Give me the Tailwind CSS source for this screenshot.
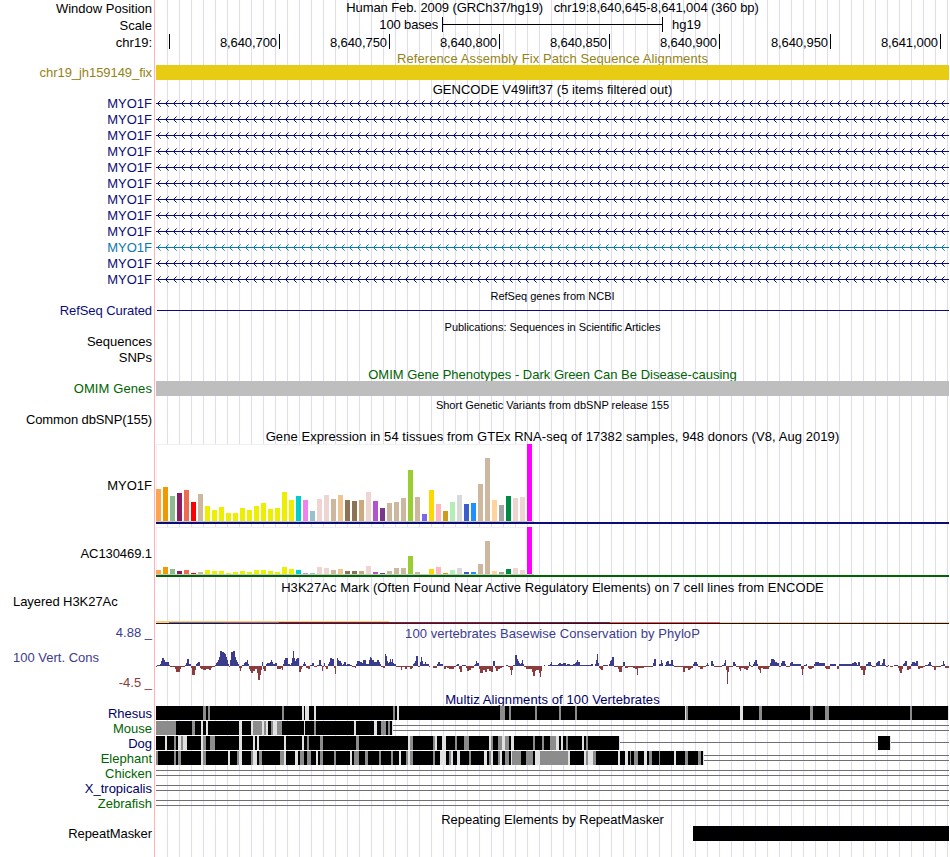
<!DOCTYPE html>
<html lang="en">
<head>
<meta charset="utf-8">
<title>chr19:8,640,645-8,641,004</title>
<script src="https://cdn.jsdelivr.net/npm/@tailwindcss/browser@4"></script>
</head>
<body class="bg-white">
<main id="browser" class="flex h-[857px] w-[950px] flex-col overflow-hidden bg-white font-['Liberation_Sans',Arial,sans-serif] text-[13px] leading-[15px] whitespace-pre text-black"></main>
<script>
const NAVY = 'text-[#0c0c78]', DARKBLUE = 'text-[#000064]', GREEN = 'text-[#006400]', BLACK = 'text-black';
const host = document.getElementById('browser');

// One horizontal band: label column, window edge, track area with guidelines.
function row(height, label, labelCls, body, bodyCls) {
  host.insertAdjacentHTML('beforeend',
    `<section class="flex shrink-0" style="height:${height}px">` +
    `<div class="w-[155px] shrink-0 border-r border-[#ffb4b4] pr-[2px] text-right ${labelCls || ''}">${label || ''}</div>` +
    `<div class="ml-px w-[793px] shrink-0 bg-[repeating-linear-gradient(90deg,transparent_0px,transparent_11px,#dcdcff_11px,#dcdcff_12px)] ${bodyCls || ''}">${body || ''}</div>` +
    `</section>`);
}
const title = (h, text, cls) => row(h, '', '', text, 'text-center ' + cls);
const svg = (h, inner, cls) =>
  `<svg class="block ${cls || ''}" width="793" height="${h}" viewBox="156 0 793 ${h}" shape-rendering="crispEdges">${inner}</svg>`;
const rect = (x, y, w, h, f) => `<rect x="${x}" y="${y}" width="${w}" height="${h}" fill="${f}"/>`;

// Position, scale and ruler
row(17, 'Window Position', 'pt-px', 'Human Feb. 2009 (GRCh37/hg19)   chr19:8,640,645-8,641,004 (360 bp)', 'text-center tracking-[-0.09px]');
row(17, 'Scale', 'pt-px',
  `<span class="w-[282px] text-right tracking-[-0.15px]">100 bases</span>` +
  `<span class="ml-1 flex h-[15px] w-[221px] items-center border-x border-black"><i class="h-px w-full bg-black"></i></span>` +
  `<span class="ml-[9px]">hg19</span>`, 'flex');
const ticks = [[169, ''], [279, '8,640,700'], [389, '8,640,750'], [499, '8,640,800'], [609, '8,640,850'], [719, '8,640,900'], [830, '8,640,950'], [940, '8,641,000']];
let prev = 155;
row(17, 'chr19:', 'pt-px', ticks.map(([x, t]) => {
  const w = x - prev; prev = x;
  return `<span class="box-border h-[15px] shrink-0 border-r border-black pt-px pr-[2px] text-right tracking-[-0.08px]" style="width:${w}px">${t}</span>`;
}).join(''), 'flex');

title(14, 'Reference Assembly Fix Patch Sequence Alignments', 'tracking-[0.1px] text-[#968214]');
row(15, 'chr19_jh159149_fix', 'tracking-[-0.06px] text-[#968214]', '<div class="h-[15px] bg-[#e8cc14]"></div>');

// Gene models
title(15, 'GENCODE V49lift37 (5 items filtered out)', 'pt-[2px] tracking-[0.03px]');
let line = 'M156 8H949V9H156Z', tips = '';
for (let x = 157; x < 949; x += 8) {
  for (const [dx, dy] of [[1, -1], [2, -2], [1, 1], [2, 2]])
    if (x + dx < 949) line += `M${x + dx} ${8 + dy}h1v1h-1z`;
  for (const dy of [-3, 3])
    if (x + 3 < 949) tips += `M${x + 3} ${8 + dy}h1v1h-1z`;
}
const arrows = `<path fill="currentColor" d="${line}"/><path fill="currentColor" fill-opacity="0.6" d="${tips}"/>`;
for (let i = 0; i < 12; i++) {
  const c = i === 9 ? 'text-[#0c78af]' : NAVY;
  row(16, 'MYO1F', 'pt-px ' + c, svg(16, arrows, c));
}

title(16, 'RefSeq genes from NCBI', 'pt-[3px] text-[11px] leading-[12px]');
row(15, 'RefSeq Curated', 'tracking-[-0.07px] ' + NAVY, svg(15, rect(157, 7, 792, 1, '#0c0c78')));
title(16, 'Publications: Sequences in Scientific Articles', 'pt-[3px] text-[11px] leading-[12px] tracking-[-0.04px]');
row(16, 'Sequences', BLACK);
row(15, 'SNPs', BLACK);
title(16, 'OMIM Gene Phenotypes - Dark Green Can Be Disease-causing', 'pt-[2px] ' + GREEN);
row(15, 'OMIM Genes', 'tracking-[0.1px] ' + GREEN, '<div class="h-[15px] bg-[#bebebe]"></div>');
title(16, 'Short Genetic Variants from dbSNP release 155', 'pt-[3px] text-[11px] leading-[12px]');
row(15, 'Common dbSNP(155)', 'tracking-[-0.11px]');

// Tissue expression
title(16, 'Gene Expression in 54 tissues from GTEx RNA-seq of 17382 samples, 948 donors (V8, Aug 2019)', 'pt-[2px] tracking-[0.07px]');
const tissue = ('ffa54f ee9a00 8fbc8f 8b1c62 ee6a50 ff0000 cdb79e ' + 'eeee00 '.repeat(13) +
  '00cdcd ee82ee 9ac0cd eed5d2 eed5d2 cdb79e eec591 8b7355 8b7355 cdaa7d eed5d2 b452cd 7a378b cdb79e cdb79e cdb79e 9acd32 cdb79e 7a67ee ffd700 ffb6c1 cd9b1d b4eeb4 d9d9d9 3a5fcd 1e90ff cdb79e cdb79e ffd39b a6a6a6 008b45 eed5d2 eed5d2 ff00ff').split(' ');
const exprA = [32,34,25,28,31,19,27,15,11,14,8,8,13,11,15,18,12,13,29,21,25,21,10,22,26,22,26,21,20,21,29,20,13,18,19,23,51,24,7,31,17,10,19,26,17,18,37,63,21,16,25,23,24,77];
const exprB = [4,7,5,3,4,1,2,4,3,3,1,2,3,2,4,4,3,2,7,5,4,1,1,7,6,4,5,3,3,3,8,2,1,3,6,6,18,2,0,5,7,1,4,6,2,2,10,33,3,2,5,6,4,47];
function expression(data, top, base, color) {
  return rect(156, top, 378, base - top + 1, '#f0f0f0') + rect(157, top + 1, 376, base - top, '#ffffff') +
    rect(156, base, 378, 1, '#c8c8c8') +
    data.map((h, i) => h ? rect(156 + i * 7, base - h, 5, h, '#' + tissue[i]) : '').join('') +
    rect(156, base + 1, 793, 2, color);
}
row(83, 'MYO1F', 'pt-[35px]', svg(83, expression(exprA, 1, 78, '#0c0c78')));
row(53, 'AC130469.1', 'pt-[20px] tracking-[-0.08px]', svg(53, expression(exprB, 1, 48, '#006400')));

// Histone mark overlay
title(16, 'H3K27Ac Mark (Often Found Near Active Regulatory Elements) on 7 cell lines from ENCODE', 'pt-px tracking-[0.06px]');
row(30, '<div class="-mt-px pl-[13px] text-left tracking-[-0.06px]">Layered H3K27Ac</div>', BLACK, svg(30,
  rect(156, 26, 233, 1, '#ffcc78') + rect(156, 27, 13, 1, '#ffcc78') + rect(169, 27, 110, 1, '#80708c') +
  rect(279, 27, 331, 1, '#801e32') + rect(610, 27, 110, 1, '#ff5a32') + rect(720, 27, 229, 1, '#ffcc78') +
  rect(156, 28, 68, 1, '#1e1432') + rect(224, 28, 276, 1, '#46142d') + rect(500, 28, 110, 1, '#2d0f28') + rect(610, 28, 339, 1, '#140f28')));

// Conservation: each entry is "position:score", held until the next position (thirds of a pixel)
const cons = [
[150, '18:-1 21:1 30:2 33:5 36:8 42:6 45:4 57:1 60:-1 75:-3 78:-6 90:-3 93:-1 105:1 108:3 110:7 116:2 123:-2 126:-9 135:-4 138:2 141:3 144:4 150:-2 153:-3 159:-4 168:-3 177:-4 183:-2 186:-1 195:1 198:3 201:4 204:6 207:9 210:15 216:14 222:13 225:12 228:9 231:6 234:2 237:-1 240:6 243:14 249:15 255:9 258:6 261:4 264:2 267:-2 270:-5 273:-2 276:1 282:3 285:4 291:6 294:2 297:-3 300:-5 303:-7 309:-5 315:-3 321:-7 324:-14 330:-9 333:-4 336:4 339:-3 342:-5 348:2 351:3 360:4 363:6 366:4 369:2 375:3 381:-3 393:-2 396:-4 399:2 402:6 405:8 414:2 420:1 423:3 426:8 429:15 432:8 435:5 438:7 441:8 447:-6 453:-3 456:-1 459:2 462:4 466:2 468:-2 474:-3 480:1 486:3 492:-1 501:1 507:6 513:1 516:-5 519:-1 522:3 525:-1 528:-3 534:2 537:4 540:8 546:7 552:-2 555:-8 558:0 561:8 564:6 567:5 573:3 576:1 579:2 582:4 588:1 591:2 600:1 606:-1 615:-2 618:2 621:5 630:4 636:3 639:6 648:2 657:6 660:9 663:8 666:6 672:4 681:6 687:4 690:2 693:-1 699:-2 705:12 708:10 711:5 714:3 717:4 720:7 723:4 726:7 729:3 732:2 738:-1 753:-4 756:-1 765:-3 771:-1 780:-3 786:-2 789:2 792:3 795:5 798:10 804:-1 810:0'],
[420, '0:4 3:9 6:5 9:2 15:4 18:2 27:-1 30:0 39:-2 51:2 54:4 60:2 69:0 72:-3 78:-1 81:-2 87:-3 102:-1 108:1 111:2 117:-3 120:-6 126:1 132:1 138:-2 141:-5 147:-4 153:-2 162:1 165:2 168:5 171:3 177:-3 180:-7 189:-4 195:-6 201:-3 207:-5 213:-6 219:5 225:-2 228:-5 234:-3 240:-2 246:-1 252:0 258:1 264:-1 270:-4 273:-9 276:-4 279:1 285:11 291:7 294:5 297:3 300:2 304:3 307:6 310:2 312:-1 318:-3 327:-3 336:-6 339:-10 345:-5 348:-4 357:-7 360:-11 364:-5 367:0 372:1 375:0 384:1 390:2 393:4 396:1 414:2 417:3 423:2 429:3 438:1 441:2 450:1 459:2 465:3 468:4 471:6 474:4 480:1 513:2 519:0 525:2 528:6 531:12 534:3 537:-2 540:-3 543:-4 549:1 564:0 567:2 570:5 573:6 576:9 582:-1 594:-3 597:-6 606:-1 609:4 615:-2 624:-1 639:-2 645:-3 651:-9 654:-2 672:-1 699:3 702:7 708:0 717:2 723:6 726:3 729:0 735:1 738:4 741:5 747:2 753:6 759:1 762:-1 789:-6 796:-2 804:-4 810:0'],
[690, '0:-3 3:-2 9:2 12:4 21:2 24:-1 30:-3 39:-1 48:1 51:3 54:1 57:0 63:5 69:2 72:-1 96:1 102:3 105:6 108:-4 111:-18 114:-6 117:-1 129:4 135:2 138:-1 147:-3 150:-5 154:-2 162:-3 168:-4 174:-2 177:4 180:1 183:-1 189:2 192:4 195:6 201:2 204:-3 207:-4 210:-7 213:-2 219:-3 237:-1 240:3 243:7 252:6 255:4 261:3 267:-1 273:3 276:5 285:2 288:-1 300:3 303:4 309:2 333:-3 336:-9 339:-3 342:1 348:2 351:0 354:-2 357:-3 366:-2 372:2 375:4 387:3 405:-2 408:-3 420:2 438:0 441:-3 447:2 486:3 492:4 498:3 501:1 504:4 510:-2 513:-4 519:-9 525:-4 528:2 534:4 543:1 546:-1 558:3 561:4 564:5 570:1 576:3 579:7 585:1 588:-1 594:1 597:0 600:-1 609:0 612:1 624:-2 627:-5 630:-7 636:-3 639:2 642:3 645:5 651:-4 657:-3 663:2 666:4 675:3 678:5 684:-3 690:-2 699:-1 705:1 714:2 717:4 723:1 726:-1 732:-4 738:-1 753:1 759:5 762:2 765:-2 777:0']];
let wig = '';
for (const [off, str] of cons) {
  const s = str.split(' ').map(v => v.split(':').map(Number));
  for (let i = 0; i < s.length - 1; i++) {
    const x = off + Math.round(s[i][0] / 3), w = off + Math.round(s[i + 1][0] / 3) - x, h = s[i][1];
    if (w > 0 && h) wig += h > 0 ? rect(x, 25 - h, w, h, '#3c3c8c') : rect(x, 25, w, -h, '#8c3c3c');
  }
}
row(16, '4.88 _', 'text-[#3c3c8c]', '100 vertebrates Basewise Conservation by PhyloP', 'pt-px text-center tracking-[0.06px] text-[#3c3c8c]');
row(50, '<div class="h-[25px] pt-[9px] pl-[13px] text-left text-[#3c3c8c]">100 Vert. Cons</div><div class="pt-[9px] text-[#8c3c3c]">-4.5 _</div>', '', svg(50, wig));

// Species alignments: gray (g) and pale (l) stretches over each black block
title(15, 'Multiz Alignments of 100 Vertebrates', 'pt-px tracking-[0.1px] text-[#000064]');
const shade = { g: '#8c8c8c', l: '#e1e1e1' };
function marks(groups) {
  return groups.map(([off, str]) => str.split(' ').map(m => {
    const [a, b] = m.slice(1).split('-').map(Number);
    const x = off + Math.round(a / 3);
    return rect(x, 0, off + Math.round(b / 3) - x, 14, shade[m[0]]);
  }).join('')).join('');
}
const gap = (x, ys, end = 949) => ys.map(y => rect(x, y, end - x, 1, '#707070')).join('');
const species = [
  ['Rhesus', DARKBLUE, rect(156, 0, 792, 14, '#000') + marks([
    [150, 'g159-168 g174-180 g396-402 l456-462 l465-477 l492-498 g729-735 l741-747'],
    [420, 'g240-255 g267-273 g345-351 g417-423 g465-471 l795-798 g798-804'],
    [690, 'l150-159 g207-216 g360-369 g405-417 g660-666 l774-777']])],
  ['Mouse', GREEN, gap(393, [4, 9]) + rect(156, 0, 236, 14, '#000') + marks([
    [150, 'g18-78 g126-135 l153-159 l168-174 l267-276 l303-309 g309-336 l336-342 g342-348 l348-354 g363-369 l369-381 g381-396 l462-465 g492-498 l612-618 l672-681 g693-708 g714-720 l726-729']])],
  ['Dog', DARKBLUE, gap(620, [6], 878) + gap(891, [6]) + rect(156, 0, 463, 14, '#000') + rect(878, 0, 12, 14, '#000') + marks([
    [150, 'l45-51 g72-78 l84-93 g93-99 l99-111 l153-159 g159-168 g180-195 l267-276 l309-315 l321-327 l402-408 l456-462 g471-477 g510-519 g618-627 l774-780 g780-789'],
    [420, 'g39-45 l45-51 l66-78 g105-111 g132-147 l207-213 g213-219 g234-246 l246-255 g255-267 l273-282 g339-345 g366-372 g390-408 l408-417 l423-429 g438-444 l486-492 g498-504 l597-600'],
    [690, 'l600-603']])],
  ['Elephant', GREEN, gap(704, [4, 9]) + rect(156, 0, 547, 14, '#000') + marks([
    [150, 'g18-24 g72-78 g84-93 l153-159 g159-168 l234-240 g261-267 l267-276 g303-309 l309-321 g327-336 g390-402 l402-408 l435-444 g450-462 g471-483 l498-504 g510-519 g552-558 l600-606 g612-627 g645-654 g687-693 g723-729 l747-753 g768-774 l774-780 g780-789'],
    [420, 'g39-45 l60-78 g87-93 l93-99 l111-120 g147-153 l192-201 g207-213 l213-219 g234-240 l240-246 g255-267 l273-276 g276-303 g318-339 l345-360 g360-444 l444-450 l492-498 g498-504 l504-519 g519-528 l594-600 l615-624 g630-633 g642-654 l672-681 g687-696 g717-720 l762-768 g795-804'],
    [690, 'g24-33 l39-42']])],
  ['Chicken', GREEN, gap(156, [4, 9])],
  ['X_tropicalis', DARKBLUE, gap(156, [4, 9])],
  ['Zebrafish', GREEN, gap(156, [4, 9])]];
species.forEach(([name, color, art]) => row(15, name, color, svg(15, art)));

title(15, 'Repeating Elements by RepeatMasker', 'pt-px');
row(31, 'RepeatMasker', 'tracking-[-0.06px]', '<div class="ml-[537px] h-[15px] bg-black"></div>');
</script>
</body>
</html>
